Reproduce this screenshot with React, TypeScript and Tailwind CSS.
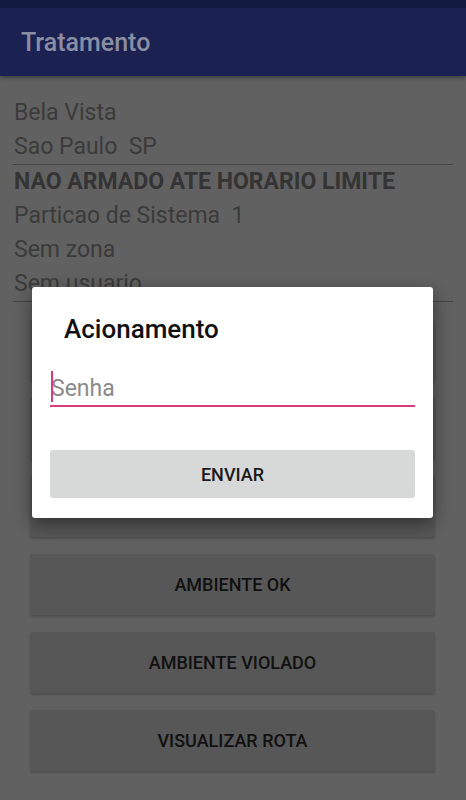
import React from "react";

const buttons = ["", "", "", "AMBIENTE OK", "AMBIENTE VIOLADO", "VISUALIZAR ROTA"];

export default function App() {
  return (
    <div
      className="relative w-[466px] h-[800px] overflow-hidden bg-[#616161]"
      style={{ fontFamily: "Roboto, 'Noto Sans', sans-serif" }}
    >
      {/* status bar */}
      <div className="h-[8px] bg-[#131a42]" />
      {/* app bar */}
      <header className="relative z-10 h-[68px] bg-[#1b2150] flex items-center px-[21px] shadow-[0_2px_4px_rgba(0,0,0,0.35)]">
        <h1 className="text-[25px] font-medium text-[#8a8ea2] leading-none">Tratamento</h1>
      </header>

      {/* content */}
      <main className="px-[13px] pt-[20px]">
        <div className="text-[23px] leading-[34px] text-[#3b3b3b]">
          <div className="pl-[1px]">Bela Vista</div>
          <div className="pl-[1px] whitespace-pre">Sao Paulo  SP</div>
        </div>
        <div className="h-[1px] bg-[#444444]" />
        <div className="text-[23px] leading-[34px] text-[#3b3b3b]">
          <div className="pl-[1px] font-bold text-[#343434]">NAO ARMADO ATE HORARIO LIMITE</div>
          <div className="pl-[1px] whitespace-pre">Particao de Sistema  1</div>
          <div className="pl-[1px]">Sem zona</div>
          <div className="pl-[1px]">Sem usuario</div>
        </div>
        <div className="h-[1px] bg-[#444444]" />

        <div className="mt-[18px] ml-[17px] mr-[18px] flex flex-col gap-[17px]">
          {buttons.map((b, i) => (
            <div
              key={i}
              className="h-[61px] rounded-[2px] bg-[#575757] shadow-[0_2px_2px_rgba(0,0,0,0.18)] flex items-center justify-center text-[18px] font-medium text-[#111111]"
            >
              {b}
            </div>
          ))}
        </div>
      </main>

      {/* dialog */}
      <div className="absolute left-[32px] top-[287px] w-[401px] h-[231px] bg-white rounded-[3px] shadow-[0_6px_18px_rgba(0,0,0,0.45)] px-[18px] pt-[26px]">
        <div className="pl-[14px] text-[26px] leading-[32px] font-medium text-[#111111]">Acionamento</div>
        <div className="relative mt-[25px] h-[37px] border-b-2 border-[#d83a7e]">
          <span className="absolute left-[1px] top-[1px] w-[2px] h-[31px] bg-[#d83a7e]" />
          <div className="pl-[1px] pt-[2px] text-[23px] leading-[34px] text-[#8a8a8a]">Senha</div>
        </div>
        <div className="mt-[43px] h-[48px] rounded-[3px] bg-[#d7d8d8] flex items-center justify-center text-[18px] font-medium text-[#1a1a1a]">
          ENVIAR
        </div>
      </div>
    </div>
  );
}
